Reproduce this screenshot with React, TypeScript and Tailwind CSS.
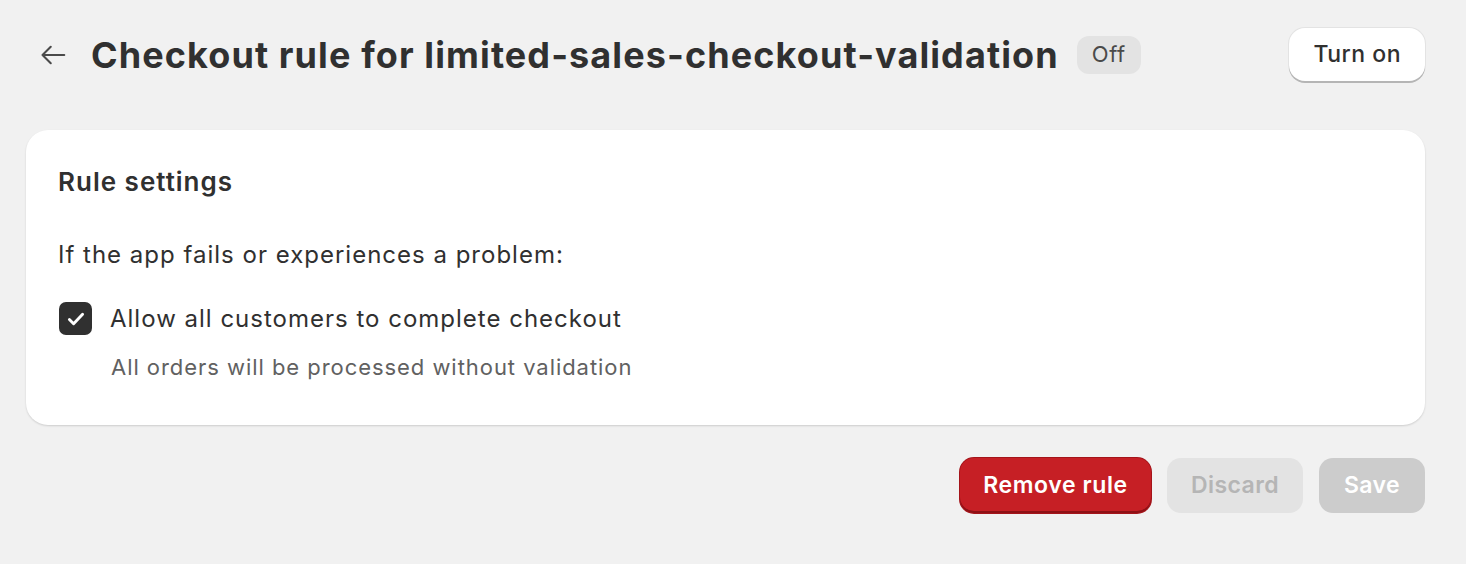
import React from "react";

const font = { fontFamily: "Inter, 'Noto Sans', sans-serif" };

function BackArrow() {
  return (
    <svg width="30" height="30" viewBox="0 0 20 20" fill="none" className="text-[#4a4a4a]">
      <path d="M17.5 10H3M8.5 4.5L3 10l5.5 5.5" stroke="currentColor" strokeWidth="1.4" strokeLinecap="round" strokeLinejoin="round" />
    </svg>
  );
}

function CheckedBox() {
  return (
    <div className="w-[33px] h-[33px] rounded-[7px] bg-[#303030] flex items-center justify-center shrink-0">
      <svg width="24" height="24" viewBox="0 0 20 20" fill="none">
        <path d="M4.5 10.5l3.5 3.5 7.5-8" stroke="white" strokeWidth="2.4" strokeLinecap="round" strokeLinejoin="round" />
      </svg>
    </div>
  );
}

export default function App() {
  return (
    <div className="min-h-[564px] bg-[#f1f1f1] pl-[26px] pr-[41px] pt-[28px] text-[#303030]" style={font}>
      <div className="flex items-center h-[53px]">
        <div className="w-[65px] flex items-center pl-[12px]">
          <BackArrow />
        </div>
        <h1 className="text-[36px] font-bold tracking-[1.1px] leading-none">Checkout rule for limited-sales-checkout-validation</h1>
        <span className="ml-[18px] h-[38px] px-[15px] rounded-[12px] bg-[#e3e3e3] flex items-center text-[22px] tracking-[0.6px] text-[#4a4a4a]">Off</span>
        <button className="ml-auto h-[53px] px-[24px] rounded-[16px] bg-white text-[23px] font-medium tracking-[0.5px] text-[#303030] shadow-[0_2px_0_0_#b5b5b5,0_0_0_1px_#e3e3e3]">Turn on</button>
      </div>

      <div className="mt-[49px] bg-white rounded-[22px] shadow-[0_1px_2px_rgba(0,0,0,0.15)] px-[32px] pt-[37px] pb-[44px]">
        <h2 className="text-[26px] font-semibold tracking-[1px] leading-[30px]">Rule settings</h2>
        <p className="mt-[43px] text-[24px] tracking-[1px] leading-[30px]">If the app fails or experiences a problem:</p>
        <div className="mt-[32px] flex items-center gap-[18px] pl-[1px]">
          <CheckedBox />
          <span className="text-[24px] tracking-[1px] leading-[30px]">Allow all customers to complete checkout</span>
        </div>
        <p className="mt-[18px] pl-[53px] text-[22px] tracking-[0.95px] leading-[28px] text-[#616161]">All orders will be processed without validation</p>
      </div>

      <div className="mt-[33px] flex justify-end gap-[16px]">
        <button className="h-[55px] w-[191px] rounded-[14px] bg-[#c61f25] text-white text-[23px] font-semibold tracking-[0.6px] shadow-[inset_0_-2px_0_#8e1116,0_0_0_1px_#a4141a]">Remove rule</button>
        <button className="h-[55px] w-[136px] rounded-[14px] bg-[#e3e3e3] text-[#b5b5b5] text-[23px] font-semibold tracking-[0.4px]">Discard</button>
        <button className="h-[55px] w-[106px] rounded-[14px] bg-[#cccccc] text-white text-[23px] font-semibold tracking-[0.4px]">Save</button>
      </div>
    </div>
  );
}
